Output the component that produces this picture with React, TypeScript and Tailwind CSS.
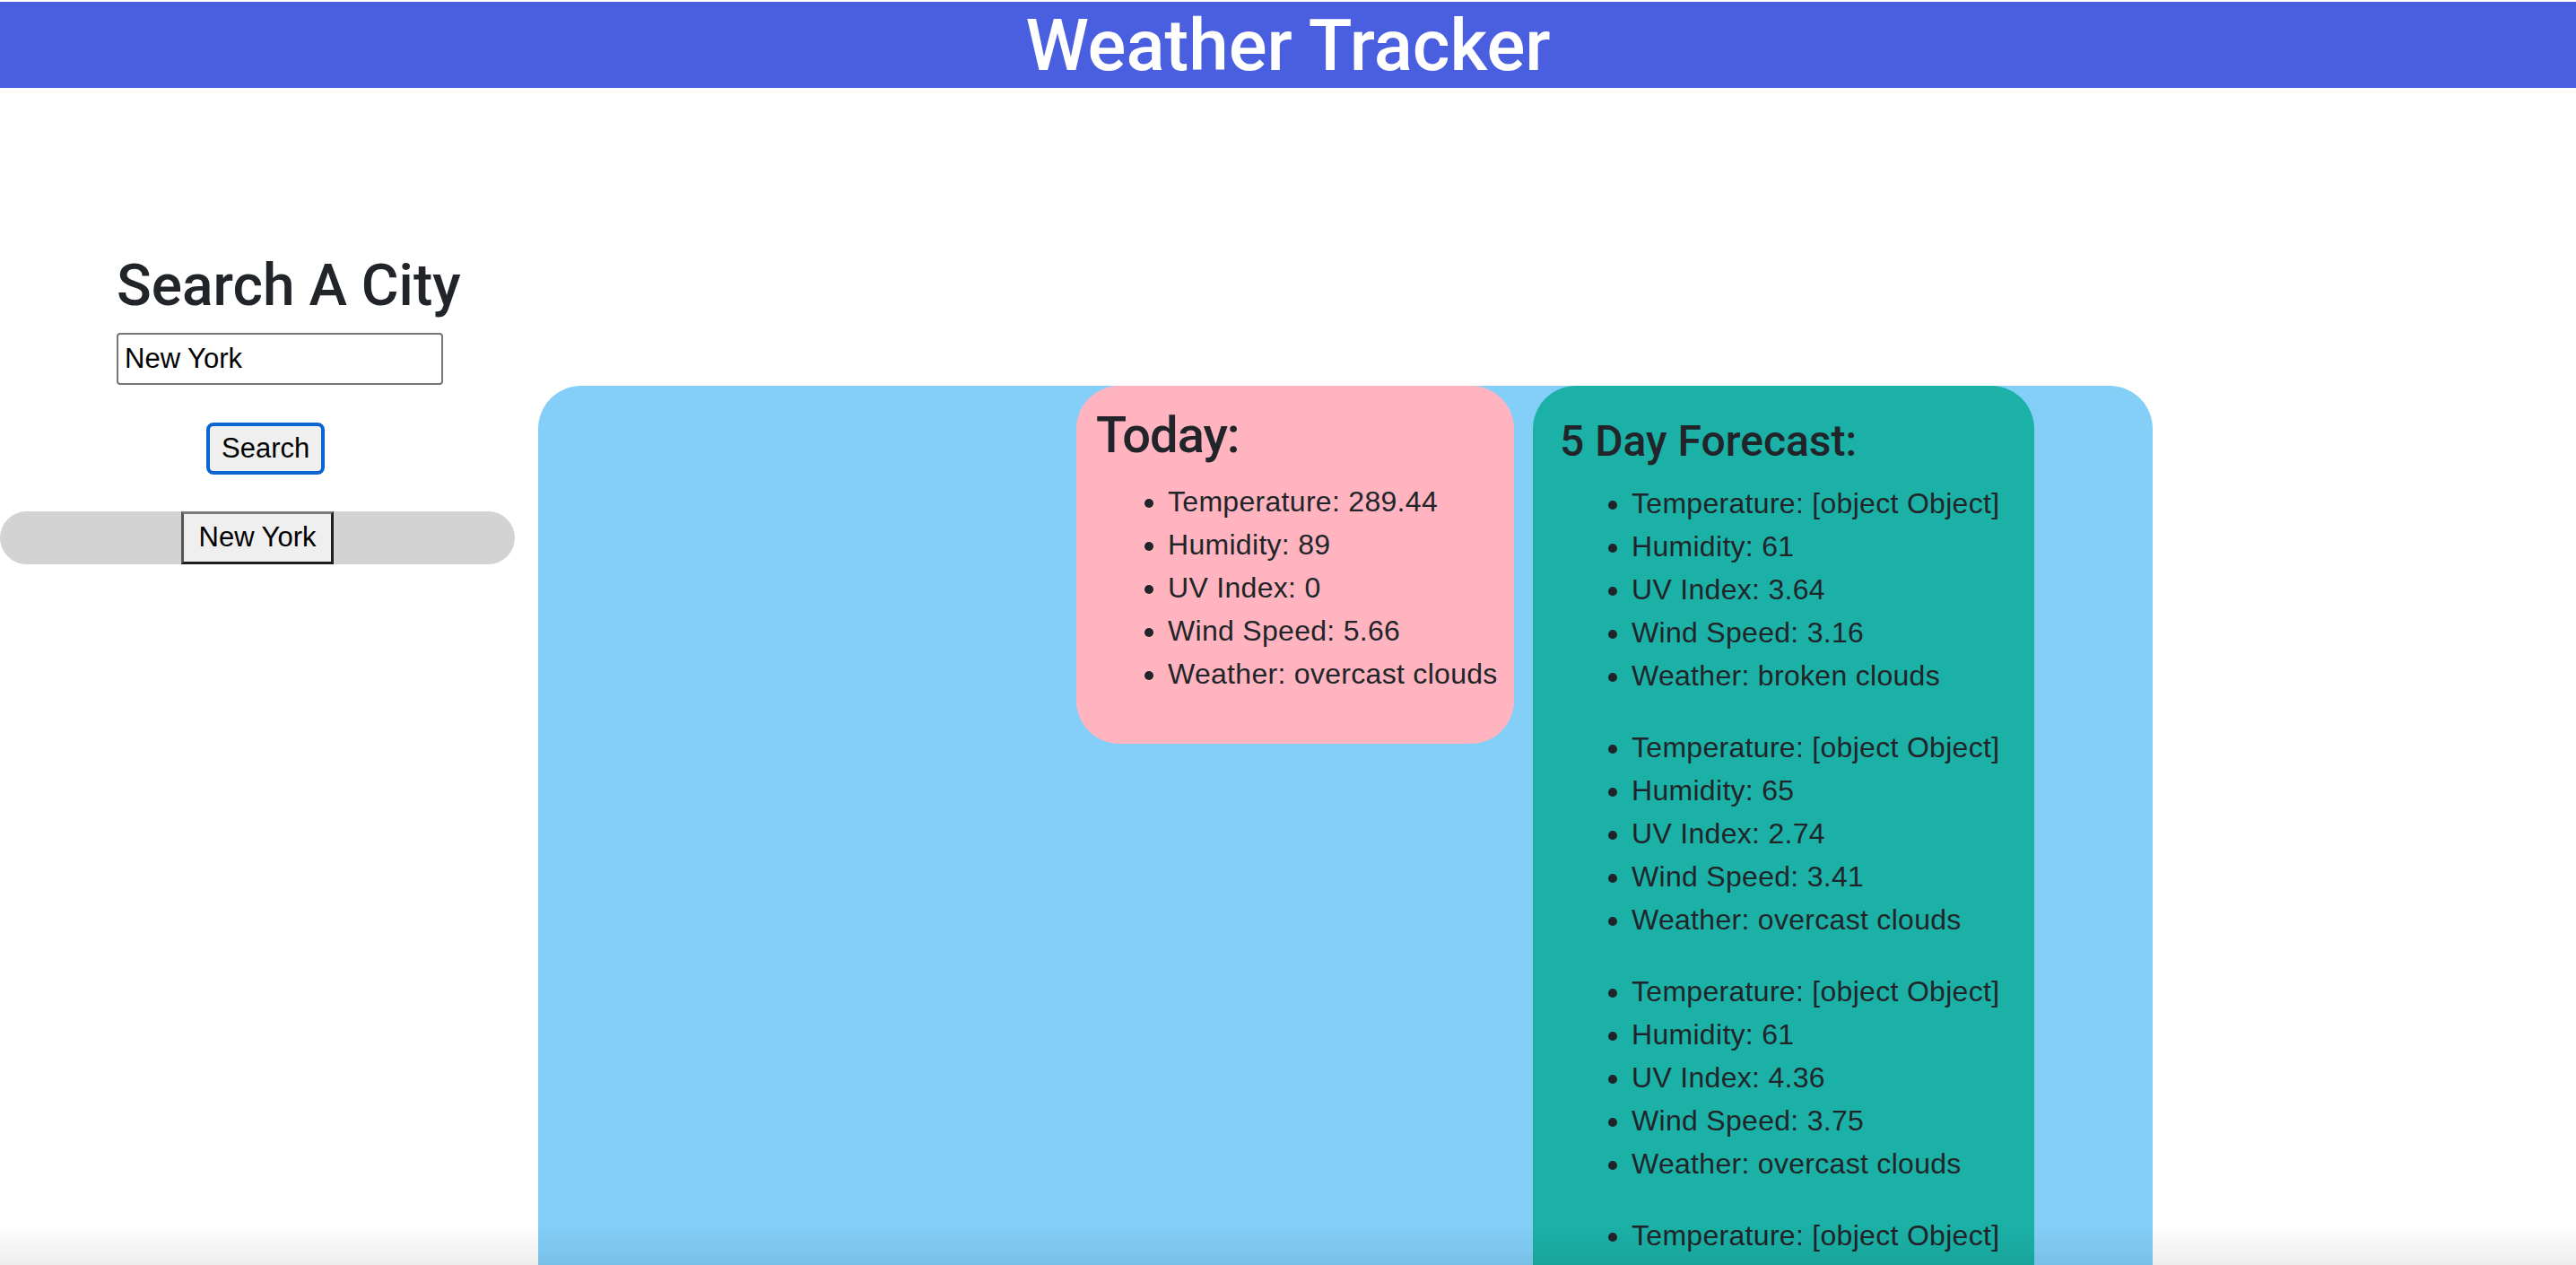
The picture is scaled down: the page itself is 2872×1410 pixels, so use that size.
import { useState } from "react";

type Day = {
  temp: string;
  humidity: string;
  uv: string;
  wind: string;
  weather: string;
};

const today: Day = {
  temp: "289.44",
  humidity: "89",
  uv: "0",
  wind: "5.66",
  weather: "overcast clouds",
};

const forecast: Day[] = [
  { temp: "[object Object]", humidity: "61", uv: "3.64", wind: "3.16", weather: "broken clouds" },
  { temp: "[object Object]", humidity: "65", uv: "2.74", wind: "3.41", weather: "overcast clouds" },
  { temp: "[object Object]", humidity: "61", uv: "4.36", wind: "3.75", weather: "overcast clouds" },
  { temp: "[object Object]", humidity: "63", uv: "4.12", wind: "4.02", weather: "light rain" },
  { temp: "[object Object]", humidity: "70", uv: "3.9", wind: "2.85", weather: "scattered clouds" },
];

function DayList({ day }: { day: Day }) {
  return (
    <ul className="list-disc pl-[80px] mb-[32px] text-[32px] leading-[48px] tracking-[0.3px] whitespace-nowrap">
      <li>Temperature: {day.temp}</li>
      <li>Humidity: {day.humidity}</li>
      <li>UV Index: {day.uv}</li>
      <li>Wind Speed: {day.wind}</li>
      <li>Weather: {day.weather}</li>
    </ul>
  );
}

export default function App() {
  const [city, setCity] = useState("New York");
  const [history] = useState(["New York"]);

  return (
    <div className="min-h-screen bg-white text-[#212529] font-['Liberation_Sans',Arial,sans-serif]">
      {/* header */}
      <header className="mt-[2px] h-[96px] pt-[3px] bg-[#4a5fe0] text-center">
        <h1 className="font-['Roboto',sans-serif] font-medium text-[80px] leading-[93px] text-white">Weather Tracker</h1>
      </header>

      <div className="flex">
        {/* sidebar */}
        <aside className="w-[574px] shrink-0 pt-[182px]">
          <h2 className="ml-[130px] font-['Roboto',sans-serif] font-medium text-[64px] leading-[77px]">Search A City</h2>
          <input
            value={city}
            onChange={(e) => setCity(e.target.value)}
            className="block mt-[14px] ml-[130px] w-[364px] h-[58px] px-[7px] border-2 border-[#767676] rounded-[4px] text-[31px] text-black outline-none"
          />
          <button className="block mt-[42px] ml-[230px] h-[58px] px-[13px] border-4 border-[#0c64d0] rounded-[8px] bg-[#efefef] text-[31px] text-black">
            Search
          </button>
          <div className="mt-[41px] h-[59px] rounded-full bg-[#d3d3d3] flex justify-center">
            {history.map((c) => (
              <button
                key={c}
                className="h-[59px] w-[170px] border-[3px] border-t-[#7a7a7a] border-l-[#555] border-r-[#1e1e1e] border-b-[#1e1e1e] bg-[#efefef] text-[31px] text-black"
              >
                {c}
              </button>
            ))}
          </div>
        </aside>

        {/* results */}
        <main className="ml-[26px] mt-[332px] w-[1800px] rounded-[48px] bg-[#83cff8] flex items-start gap-[21px] pl-[600px]">
          <section className="w-[488px] shrink-0 rounded-[48px] bg-[#ffb4c0] p-[22px]">
            <h3 className="font-['Roboto',sans-serif] font-medium text-[56px] leading-[67px] tracking-[-1px] mb-[16px]">Today:</h3>
            <ul className="list-disc pl-[80px] text-[32px] leading-[48px] tracking-[0.3px] whitespace-nowrap">
              <li>Temperature: {today.temp}</li>
              <li>Humidity: {today.humidity}</li>
              <li>UV Index: {today.uv}</li>
              <li>Wind Speed: {today.wind}</li>
              <li>Weather: {today.weather}</li>
            </ul>
            <div className="h-[32px]" />
          </section>

          <section className="w-[559px] shrink-0 rounded-[48px] bg-[#1bb1a7] pt-[33px] px-[30px] pb-[30px]">
            <h4 className="font-['Roboto',sans-serif] font-medium text-[48px] leading-[58px] mb-[16px]">5 Day Forecast:</h4>
            {forecast.map((d, i) => (
              <DayList key={i} day={d} />
            ))}
          </section>
        </main>
      </div>

      {/* window edge shadow */}
      <div className="pointer-events-none fixed bottom-0 left-0 right-0 h-[45px] bg-gradient-to-b from-transparent to-black/[0.07]" />
    </div>
  );
}
